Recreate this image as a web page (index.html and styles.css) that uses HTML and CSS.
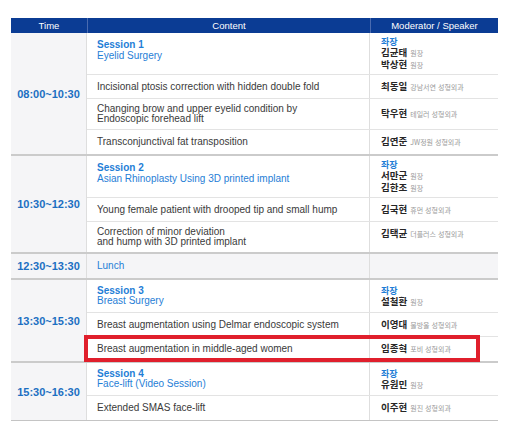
FILE: index.html
```html
<!DOCTYPE html>
<html lang="ko">
<head>
<meta charset="utf-8">
<title>Program</title>
<link rel="stylesheet" href="styles.css">
</head>
<body>
<div class="page">
  <div class="table">
    <div class="thead">
      <div class="th">Time</div>
      <div class="th">Content</div>
      <div class="th">Moderator / Speaker</div>
    </div>

    <div class="group">
      <div class="time">08:00~10:30</div>
      <div class="rows">
        <div class="row session">
          <div class="content top"><span class="s-num">Session 1</span><span class="s-title">Eyelid Surgery</span></div>
          <div class="mod"><span class="chair">좌장</span><span><b>김균태</b><small>원장</small></span><span><b>박상현</b><small>원장</small></span></div>
        </div>
        <div class="row">
          <div class="content">Incisional ptosis correction with hidden double fold</div>
          <div class="mod"><span><b>최동일</b><small>강남서연 성형외과</small></span></div>
        </div>
        <div class="row">
          <div class="content">Changing brow and upper eyelid condition by<br>Endoscopic forehead lift</div>
          <div class="mod"><span><b>탁우현</b><small>테일러 성형외과</small></span></div>
        </div>
        <div class="row">
          <div class="content">Transconjunctival fat transposition</div>
          <div class="mod"><span><b>김연준</b><small>JW정원 성형외과</small></span></div>
        </div>
      </div>
    </div>

    <div class="group">
      <div class="time">10:30~12:30</div>
      <div class="rows">
        <div class="row session">
          <div class="content top"><span class="s-num">Session 2</span><span class="s-title">Asian Rhinoplasty Using 3D printed implant</span></div>
          <div class="mod"><span class="chair">좌장</span><span><b>서만군</b><small>원장</small></span><span><b>김한조</b><small>원장</small></span></div>
        </div>
        <div class="row">
          <div class="content">Young female patient with drooped tip and small hump</div>
          <div class="mod"><span><b>김국현</b><small>휴먼 성형외과</small></span></div>
        </div>
        <div class="row">
          <div class="content">Correction of minor deviation<br>and hump with 3D printed implant</div>
          <div class="mod top"><span><b>김택균</b><small>더플러스 성형외과</small></span></div>
        </div>
      </div>
    </div>

    <div class="group">
      <div class="time">12:30~13:30</div>
      <div class="rows">
        <div class="row lunch">
          <div class="content blue">Lunch</div>
          <div class="mod"></div>
        </div>
      </div>
    </div>

    <div class="group">
      <div class="time">13:30~15:30</div>
      <div class="rows">
        <div class="row session">
          <div class="content"><span class="s-num">Session 3</span><span class="s-title">Breast Surgery</span></div>
          <div class="mod"><span class="chair">좌장</span><span><b>설철환</b><small>원장</small></span></div>
        </div>
        <div class="row">
          <div class="content">Breast augmentation using Delmar endoscopic system</div>
          <div class="mod"><span><b>이영대</b><small>물방울 성형외과</small></span></div>
        </div>
        <div class="row marked">
          <div class="content">Breast augmentation in middle-aged women</div>
          <div class="mod"><span><b>임종혁</b><small>포비 성형외과</small></span></div>
          <div class="highlight"></div>
        </div>
      </div>
    </div>

    <div class="group">
      <div class="time">15:30~16:30</div>
      <div class="rows">
        <div class="row session">
          <div class="content"><span class="s-num">Session 4</span><span class="s-title">Face-lift (Video Session)</span></div>
          <div class="mod"><span class="chair">좌장</span><span><b>유원민</b><small>원장</small></span></div>
        </div>
        <div class="row">
          <div class="content">Extended SMAS face-lift</div>
          <div class="mod"><span><b>이주현</b><small>원진 성형외과</small></span></div>
        </div>
      </div>
    </div>
  </div>
</div>
</body>
</html>
```

FILE: styles.css
```css
* { box-sizing: border-box; }

html, body {
  margin: 0;
  padding: 0;
  background: #ffffff;
}

body {
  font-family: "Liberation Sans", "Noto Sans CJK KR", Arial, sans-serif;
  color: #3a3a3a;
}

.page {
  padding: 18px 10px 0 11px;
}

.table {
  width: 487px;
  border-bottom: 1px solid #c4c4c4;
}

.thead {
  display: grid;
  grid-template-columns: 76px 283px 1fr;
  height: 15px;
  background: #0b3c94;
}

.th {
  color: #ffffff;
  font-size: 9.5px;
  line-height: 15px;
  text-align: center;
  border-left: 1px solid #4a6bb0;
}

.th:first-child { border-left: none; }

.group {
  display: grid;
  grid-template-columns: 76px 1fr;
  border-bottom: 2px solid #cbcbcb;
}

.group:last-child { border-bottom: none; }

.time {
  background: #f5f5f7;
  border-right: 1px solid #dedede;
  color: #1c6fc2;
  font-weight: bold;
  font-size: 11px;
  display: flex;
  align-items: center;
  justify-content: center;
}

.rows {
  display: flex;
  flex-direction: column;
}

.row {
  position: relative;
  display: grid;
  grid-template-columns: 283px 1fr;
  min-height: 24px;
  border-bottom: 1px solid #e3e3e3;
}

.row:last-child { border-bottom: none; }

.row.session { min-height: 33px; }

.row.lunch { background: #f5f5f7; }

.content {
  padding: 5px 10px;
  font-size: 10px;
  line-height: 10px;
  display: flex;
  flex-direction: column;
  justify-content: center;
  border-right: 1px solid #dedede;
}

.content.top { justify-content: flex-start; padding-top: 7px; }

.content.blue { color: #1f7ed6; }

.s-num {
  color: #1f7ed6;
  font-weight: bold;
  line-height: 10.5px;
}

.s-title {
  color: #1f7ed6;
  line-height: 10.5px;
}

.mod {
  padding: 3px 11px;
  display: flex;
  flex-direction: column;
  justify-content: center;
  font-family: "Noto Sans CJK KR", "Liberation Sans", sans-serif;
  font-size: 9px;
  line-height: 11px;
}

.mod.top { justify-content: flex-start; padding-top: 6px; }

.mod b {
  font-weight: bold;
  font-size: 9.5px;
  color: #262626;
}

.mod small {
  font-size: 7px;
  color: #9a9a9a;
  margin-left: 3px;
}

.chair {
  color: #1f7ed6;
  font-weight: bold;
}

.highlight {
  position: absolute;
  left: -3px;
  top: -2px;
  width: 396px;
  height: 27px;
  border: 4px solid #e01f2c;
  pointer-events: none;
}
```
